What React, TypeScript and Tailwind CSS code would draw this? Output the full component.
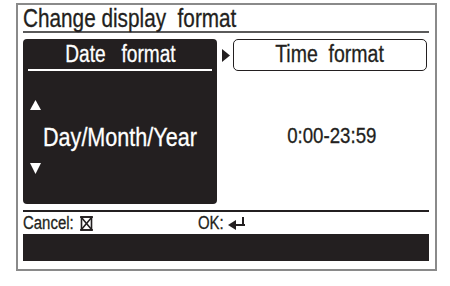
const font = "font-['Liberation_Sans',Arial,sans-serif]";

// Arial Narrow look: Liberation Sans squeezed horizontally
function Narrow({ children, left = false }: { children: React.ReactNode; left?: boolean }) {
  return (
    <span
      className={`inline-block whitespace-pre scale-x-[0.83] [-webkit-text-stroke:0.3px_currentColor] ${
        left ? "origin-left" : "origin-center"
      }`}
    >
      {children}
    </span>
  );
}

function UpTri() {
  return (
    <svg width="11" height="10" viewBox="0 0 11 10" className="block">
      <polygon points="5.5,0 11,10 0,10" fill="white" />
    </svg>
  );
}

function DownTri() {
  return (
    <svg width="11" height="11" viewBox="0 0 11 11" className="block">
      <polygon points="0,0 11,0 5.5,11" fill="white" />
    </svg>
  );
}

function CancelIcon() {
  return (
    <svg width="13" height="15" viewBox="0 0 13 15" className="-ml-[4px]">
      <g stroke="#231f20" strokeWidth="1.6" fill="none">
        <rect x="1.5" y="1" width="10" height="13" />
        <line x1="0" y1="1" x2="13" y2="1" />
        <line x1="0" y1="14" x2="13" y2="14" />
        <line x1="1" y1="1" x2="12" y2="14" />
        <line x1="12" y1="1" x2="1" y2="14" />
      </g>
    </svg>
  );
}

function EnterIcon() {
  return (
    <svg width="17" height="13" viewBox="0 0 17 13" className="-ml-[1px]">
      <polygon points="0,8 8,3 8,13" fill="#231f20" />
      <rect x="7" y="7" width="10" height="2" fill="#231f20" />
      <rect x="14" y="0" width="2" height="9" fill="#231f20" />
    </svg>
  );
}

export default function App() {
  return (
    <div className={`w-[450px] h-[286px] bg-white pt-[3px] pl-[16px] ${font} text-[#231f20]`}>
      <div className="w-[421px] h-[268px] border-2 border-[#8a8a8a] px-[5px] flex flex-col">
        {/* Title */}
        <div className="h-[28px] border-b-2 border-[#5a5a5a] flex items-end mr-[1px]">
          <span className="text-[25px] leading-[26px]">
            <Narrow left>Change display  format</Narrow>
          </span>
        </div>

        {/* Main */}
        <div className="mt-[6px] flex h-[165px]">
          <div className="w-[194px] bg-[#231f20] rounded-[4px] flex flex-col text-white">
            <div className="mx-[5px] h-[32px] border-b-2 border-white flex items-center justify-center">
              <span className="text-[23px]">
                <Narrow>Date   format</Narrow>
              </span>
            </div>
            <div className="pl-[7px] pt-[29px]">
              <UpTri />
            </div>
            <div className="pl-[20px] mt-[10px] text-[26px] leading-[34px]">
              <Narrow left>Day/Month/Year</Narrow>
            </div>
            <div className="pl-[7px] mt-[9px]">
              <DownTri />
            </div>
          </div>

          <div className="flex-1 flex flex-col">
            <div className="flex items-center h-[32px]">
              <svg width="8" height="13" viewBox="0 0 8 13" className="ml-[5px] mr-[3px]">
                <polygon points="0,0 8,6.5 0,13" fill="#231f20" />
              </svg>
              <div className="w-[194px] h-[32px] border-[1.5px] border-[#231f20] rounded-[5px] flex items-center justify-center">
                <span className="text-[23.5px]">
                  <Narrow>Time  format</Narrow>
                </span>
              </div>
            </div>
            <div className="pl-[16px] mt-[51px] text-center text-[22.5px] leading-[28px]">
              <Narrow>0:00-23:59</Narrow>
            </div>
          </div>
        </div>

        {/* Footer */}
        <div className="mt-[6px] border-t-2 border-[#231f20] mr-[1px]">
          <div className="h-[22px] flex items-center text-[18px]">
            <div className="w-[175px] flex items-center">
              <Narrow left>Cancel:</Narrow>
              <CancelIcon />
            </div>
            <div className="flex items-center">
              <Narrow left>OK:</Narrow>
              <EnterIcon />
            </div>
          </div>
          <div className="h-[27px] bg-[#231f20]" />
        </div>
      </div>
    </div>
  );
}
